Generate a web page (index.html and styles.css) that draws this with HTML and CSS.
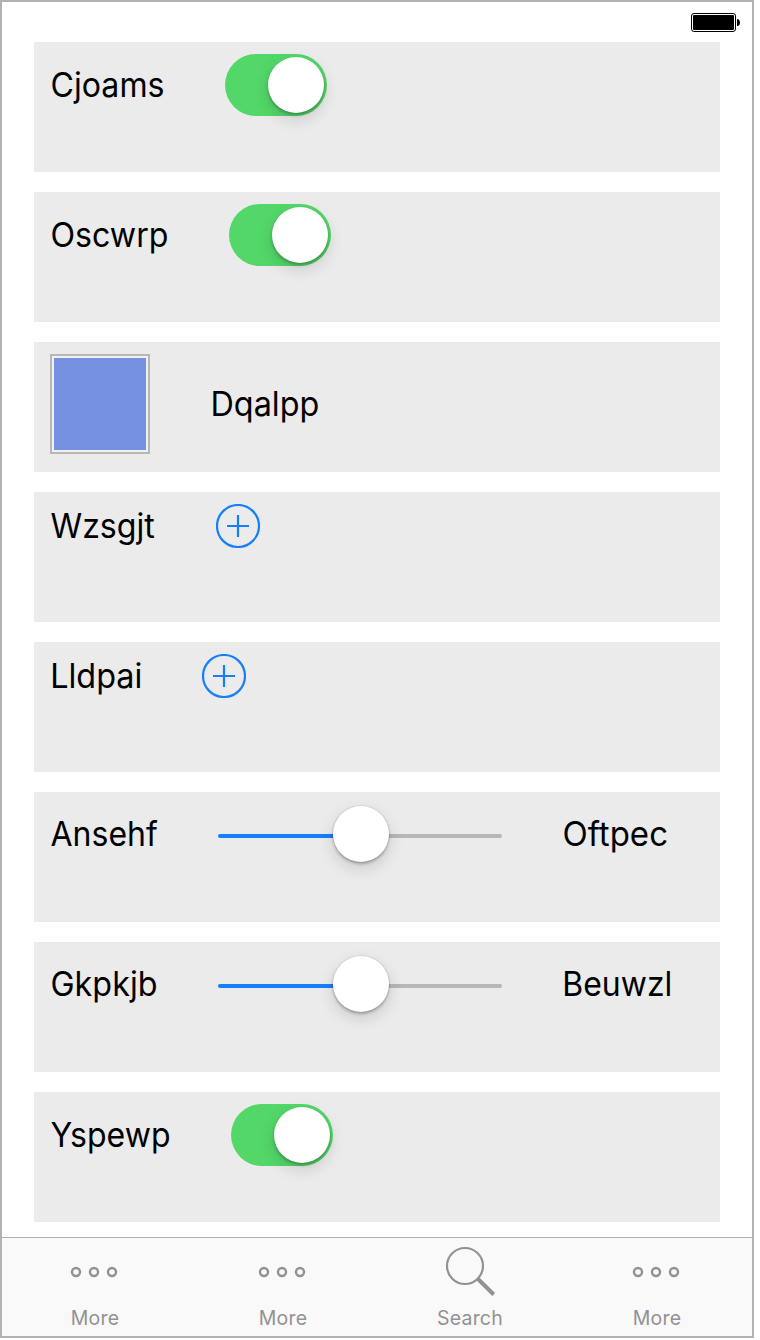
FILE: index.html
```html
<!DOCTYPE html>
<html lang="en">
<head>
<meta charset="utf-8">
<title>Controls</title>
<link rel="stylesheet" href="styles.css">
</head>
<body>
<div class="phone">
  <header class="status">
    <svg width="50" height="20" viewBox="0 0 50 20"><rect x=".5" y=".5" width="44" height="18" rx="2.5" fill="#fff" stroke="#000"/><rect x="2" y="2" width="41" height="15" rx="1" fill="#000"/><path d="M46 6h1q2 1 2 3.5t-2 3.5h-1z" fill="#000"/></svg>
  </header>
  <main class="list">
    <section class="card"><div class="row"><svg class="label" width="115" height="40"><text x=".5" y="32.4" textLength="114" lengthAdjust="spacingAndGlyphs">Cjoams</text></svg><div class="switch"><span class="thumb"></span></div></div></section>
    <section class="card"><div class="row"><svg class="label" width="119" height="40"><text x=".5" y="32.4" textLength="118" lengthAdjust="spacingAndGlyphs">Oscwrp</text></svg><div class="switch"><span class="thumb"></span></div></div></section>
    <section class="card"><div class="row"><div class="swatch"></div><svg class="label" width="110" height="40"><text x=".5" y="32.4" textLength="108.8" lengthAdjust="spacingAndGlyphs">Dqalpp</text></svg></div></section>
    <section class="card"><div class="row"><svg class="label" width="106" height="40"><text x=".5" y="32.4" textLength="104.3" lengthAdjust="spacingAndGlyphs">Wzsgjt</text></svg><svg class="add" width="44" height="44" viewBox="0 0 44 44"><circle cx="22" cy="22" r="21"/><path d="M22 11v22M11 22h22"/></svg></div></section>
    <section class="card"><div class="row"><svg class="label" width="92" height="40"><text x=".2" y="32.4" textLength="92.2" lengthAdjust="spacingAndGlyphs">Lldpai</text></svg><svg class="add" width="44" height="44" viewBox="0 0 44 44"><circle cx="22" cy="22" r="21"/><path d="M22 11v22M11 22h22"/></svg></div></section>
    <section class="card"><div class="row"><svg class="label" width="108" height="40"><text x=".5" y="32.4" textLength="107.3" lengthAdjust="spacingAndGlyphs">Ansehf</text></svg><div class="slider"><span class="filled"></span><span class="thumb"></span><span class="rest"></span></div><svg class="label" width="106" height="40"><text x=".5" y="32.4" textLength="105.5" lengthAdjust="spacingAndGlyphs">Oftpec</text></svg></div></section>
    <section class="card"><div class="row"><svg class="label" width="108" height="40"><text x=".5" y="32.4" textLength="107" lengthAdjust="spacingAndGlyphs">Gkpkjb</text></svg><div class="slider"><span class="filled"></span><span class="thumb"></span><span class="rest"></span></div><svg class="label" width="111" height="40"><text x=".3" y="32.4" textLength="110" lengthAdjust="spacingAndGlyphs">Beuwzl</text></svg></div></section>
    <section class="card"><div class="row"><svg class="label" width="121" height="40"><text x=".5" y="32.4" textLength="120" lengthAdjust="spacingAndGlyphs">Yspewp</text></svg><div class="switch"><span class="thumb"></span></div></div></section>
  </main>
  <nav class="tabs">
    <div class="tab"><svg class="icon" width="60" height="60" viewBox="0 0 60 60"><g class="dots"><circle cx="11" cy="34" r="4"/><circle cx="29" cy="34" r="4"/><circle cx="47" cy="34" r="4"/></g></svg><span>More</span></div>
    <div class="tab"><svg class="icon" width="60" height="60" viewBox="0 0 60 60"><g class="dots"><circle cx="11" cy="34" r="4"/><circle cx="29" cy="34" r="4"/><circle cx="47" cy="34" r="4"/></g></svg><span>More</span></div>
    <div class="tab"><svg class="icon" width="60" height="60" viewBox="0 0 60 60"><circle cx="25" cy="28" r="18"/><path d="M38 41 53.7 56.5" stroke-width="4"/></svg><span>Search</span></div>
    <div class="tab"><svg class="icon" width="60" height="60" viewBox="0 0 60 60"><g class="dots"><circle cx="11" cy="34" r="4"/><circle cx="29" cy="34" r="4"/><circle cx="47" cy="34" r="4"/></g></svg><span>More</span></div>
  </nav>
</div>
</body>
</html>
```
FILE: styles.css
```css
* { box-sizing: border-box; }
body { margin: 0; background: #fff; font-family: Inter, "Liberation Sans", sans-serif; }
.phone { width: 754px; height: 1338px; border: 2px solid #b2b2b2; background: #fff; display: flex; flex-direction: column; }
.status { height: 40px; padding: 11px 11px 0 0; display: flex; justify-content: flex-end; }
.list { flex: 1; padding: 0 32px; display: flex; flex-direction: column; gap: 20px; }
.card { height: 130px; padding: 12px 16px; background: #ebebeb; }
.row { display: flex; align-items: center; gap: 60px; }
.label { display: block; flex: none; overflow: visible; font-size: 33.5px; fill: #000; }
.switch { width: 102px; height: 62px; border-radius: 31px; background: #53d769; display: flex; justify-content: flex-end; padding: 3px; }
.thumb { width: 56px; height: 56px; flex: none; border-radius: 50%; background: #fff; box-shadow: 0 0 0 1px rgba(0,0,0,.05), 0 6px 16px rgba(0,0,0,.15), 0 2px 3px rgba(0,0,0,.25); }
.switch .thumb { box-shadow: 0 6px 16px rgba(0,0,0,.15), 0 2px 3px rgba(0,0,0,.25); }
.swatch { width: 100px; height: 100px; border: 2px solid #b7b7b7; padding: 2px; background: #7690e2 content-box; box-shadow: inset 0 0 0 2px #f0f0f2; }
.add { display: block; fill: none; stroke: #157efb; stroke-width: 2.2; }
.slider { width: 284px; height: 60px; display: flex; align-items: center; }
.filled, .rest { height: 4px; margin-top: 4px; background: #157efb; border-radius: 2px 0 0 2px; width: 115px; }
.rest { width: 113px; background: #b7b7b7; border-radius: 0 2px 2px 0; }
.slider .thumb { position: relative; }
.tabs { height: 99px; border-top: 1px solid #b2b2b2; background: #f9f9f9; display: grid; grid-template-columns: 188px 188px 186px 188px; color: #929292; font-size: 19.5px; line-height: 24px; letter-spacing: .2px; }
.tab { display: flex; flex-direction: column; align-items: center; padding-right: 2px; }
.tab span { margin-top: 8px; }
.icon { display: block; fill: none; stroke: #929292; stroke-width: 2.2; }
.dots { stroke-width: 2.4; }
```
